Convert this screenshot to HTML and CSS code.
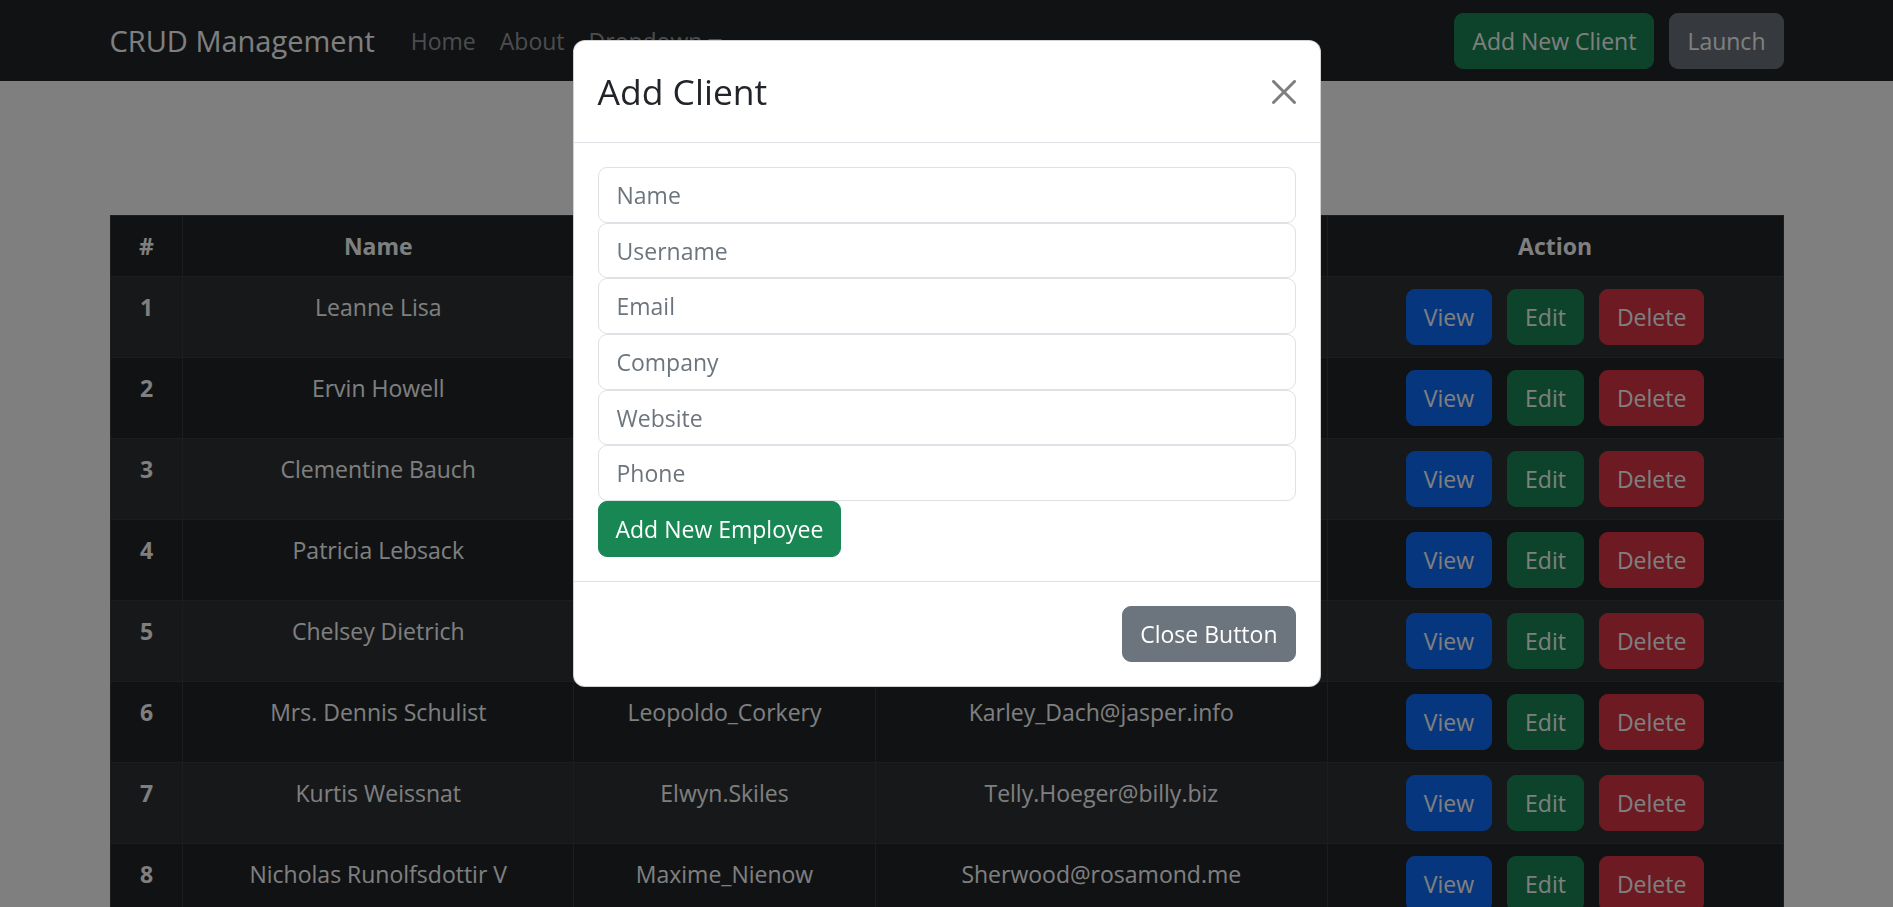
FILE: index.html
```html
<!DOCTYPE html>
<html lang="en">
<head>
<meta charset="utf-8">
<title>CRUD Management</title>
<link rel="stylesheet" href="styles.css">
</head>
<body>
<nav class="navbar">
  <div class="container nav-inner">
    <a class="brand" href="#">CRUD Management</a>
    <ul class="nav-links">
      <li><a class="nav-link" href="#">Home</a></li>
      <li><a class="nav-link" href="#">About</a></li>
      <li><a class="nav-link dropdown-toggle" href="#">Dropdown</a></li>
    </ul>
    <div class="nav-actions">
      <button class="btn btn-success">Add New Client</button>
      <button class="btn btn-secondary">Launch</button>
    </div>
  </div>
</nav>

<main class="container content">
  <table class="table">
    <colgroup>
      <col class="c-num"><col class="c-name"><col class="c-user"><col class="c-email"><col class="c-action">
    </colgroup>
    <thead>
      <tr><th>#</th><th>Name</th><th>Username</th><th>Email</th><th>Action</th></tr>
    </thead>
    <tbody>
      <tr><th>1</th><td>Leanne Lisa</td><td>Bret</td><td>Sincere@april.biz</td><td><div class="actions"><button class="btn btn-primary">View</button><button class="btn btn-success">Edit</button><button class="btn btn-danger">Delete</button></div></td></tr>
      <tr><th>2</th><td>Ervin Howell</td><td>Antonette</td><td>Shanna@melissa.tv</td><td><div class="actions"><button class="btn btn-primary">View</button><button class="btn btn-success">Edit</button><button class="btn btn-danger">Delete</button></div></td></tr>
      <tr><th>3</th><td>Clementine Bauch</td><td>Samantha</td><td>Nathan@yesenia.net</td><td><div class="actions"><button class="btn btn-primary">View</button><button class="btn btn-success">Edit</button><button class="btn btn-danger">Delete</button></div></td></tr>
      <tr><th>4</th><td>Patricia Lebsack</td><td>Karianne</td><td>Julianne.OConner@kory.org</td><td><div class="actions"><button class="btn btn-primary">View</button><button class="btn btn-success">Edit</button><button class="btn btn-danger">Delete</button></div></td></tr>
      <tr><th>5</th><td>Chelsey Dietrich</td><td>Kamren</td><td>Lucio_Hettinger@annie.ca</td><td><div class="actions"><button class="btn btn-primary">View</button><button class="btn btn-success">Edit</button><button class="btn btn-danger">Delete</button></div></td></tr>
      <tr><th>6</th><td>Mrs. Dennis Schulist</td><td>Leopoldo_Corkery</td><td>Karley_Dach@jasper.info</td><td><div class="actions"><button class="btn btn-primary">View</button><button class="btn btn-success">Edit</button><button class="btn btn-danger">Delete</button></div></td></tr>
      <tr><th>7</th><td>Kurtis Weissnat</td><td>Elwyn.Skiles</td><td>Telly.Hoeger@billy.biz</td><td><div class="actions"><button class="btn btn-primary">View</button><button class="btn btn-success">Edit</button><button class="btn btn-danger">Delete</button></div></td></tr>
      <tr><th>8</th><td>Nicholas Runolfsdottir V</td><td>Maxime_Nienow</td><td>Sherwood@rosamond.me</td><td><div class="actions"><button class="btn btn-primary">View</button><button class="btn btn-success">Edit</button><button class="btn btn-danger">Delete</button></div></td></tr>
      <tr><th>9</th><td>Glenna Reichert</td><td>Delphine</td><td>Chaim_McDermott@dana.io</td><td><div class="actions"><button class="btn btn-primary">View</button><button class="btn btn-success">Edit</button><button class="btn btn-danger">Delete</button></div></td></tr>
      <tr><th>10</th><td>Clementina DuBuque</td><td>Moriah.Stanton</td><td>Rey.Padberg@karina.biz</td><td><div class="actions"><button class="btn btn-primary">View</button><button class="btn btn-success">Edit</button><button class="btn btn-danger">Delete</button></div></td></tr>
    </tbody>
  </table>
</main>

<div class="modal-backdrop"></div>
<div class="modal">
  <div class="modal-dialog">
    <div class="modal-header">
      <h4 class="modal-title">Add Client</h4>
      <button class="btn-close" aria-label="Close">
        <svg viewBox="0 0 16 16" width="24" height="24"><path d="M.293.293a1 1 0 0 1 1.414 0L8 6.586 14.293.293a1 1 0 1 1 1.414 1.414L9.414 8l6.293 6.293a1 1 0 0 1-1.414 1.414L8 9.414l-6.293 6.293a1 1 0 0 1-1.414-1.414L6.586 8 .293 1.707a1 1 0 0 1 0-1.414z"/></svg>
      </button>
    </div>
    <div class="modal-body">
      <form class="client-form">
        <input class="form-control" type="text" placeholder="Name">
        <input class="form-control" type="text" placeholder="Username">
        <input class="form-control" type="text" placeholder="Email">
        <input class="form-control" type="text" placeholder="Company">
        <input class="form-control" type="text" placeholder="Website">
        <input class="form-control" type="text" placeholder="Phone">
        <div><button type="button" class="btn btn-success">Add New Employee</button></div>
      </form>
    </div>
    <div class="modal-footer">
      <button class="btn btn-secondary">Close Button</button>
    </div>
  </div>
</div>
</body>
</html>
```

FILE: styles.css
```css
* { box-sizing: border-box; }

html, body {
  margin: 0;
  height: 100%;
  overflow: hidden;
}

body {
  font-family: "Open Sans", "Noto Sans", "Liberation Sans", sans-serif;
  font-size: 23px;
  line-height: 36px;
  color: #212529;
  background: #fff;
}

.container {
  width: 1674px;
  margin: 0 auto;
}

/* ---------- navbar ---------- */
.navbar {
  background: #212529;
  height: 81px;
}

.nav-inner {
  height: 100%;
  display: flex;
  align-items: center;
}

.brand {
  color: #fff;
  text-decoration: none;
  font-size: 29px;
  line-height: 45px;
  margin-right: 24px;
}

.nav-links {
  display: flex;
  list-style: none;
  margin: 0;
  padding: 0;
  flex: 1;
}

.nav-link {
  display: block;
  padding: 12px 12px;
  color: rgba(255, 255, 255, 0.55);
  text-decoration: none;
}

.dropdown-toggle::after {
  content: "";
  display: inline-block;
  margin-left: 6px;
  vertical-align: 4px;
  border-top: 7px solid;
  border-left: 7px solid transparent;
  border-right: 7px solid transparent;
}

.nav-actions {
  display: flex;
  gap: 15px;
}

/* ---------- buttons ---------- */
.btn {
  font-family: inherit;
  font-size: 23px;
  line-height: 36px;
  height: 56px;
  padding: 9px 17px;
  border: 1px solid transparent;
  border-radius: 9px;
  color: #fff;
  cursor: pointer;
  white-space: nowrap;
}

.btn-primary { background: #0d6efd; border-color: #0d6efd; }
.btn-success { background: #198754; border-color: #198754; }
.btn-danger { background: #dc3545; border-color: #dc3545; }
.btn-secondary { background: #6c757d; border-color: #6c757d; }

/* ---------- table ---------- */
.content {
  padding-top: 134px;
}

.table {
  width: 100%;
  border-collapse: collapse;
  background: #212529;
  color: #fff;
  text-align: center;
}

.c-num { width: 73px; }
.c-name { width: 391px; }
.c-user { width: 302px; }
.c-email { width: 452px; }
.c-action { width: 456px; }

.table th,
.table td {
  border: 1px solid #373b3e;
  padding: 12px;
  vertical-align: top;
  font-weight: 400;
}

.table th {
  font-weight: 700;
}

.table tbody tr:nth-child(odd) {
  background: #2c3034;
}

.actions {
  display: flex;
  justify-content: center;
  gap: 15px;
}

/* ---------- modal ---------- */
.modal-backdrop {
  position: fixed;
  inset: 0;
  background: rgba(0, 0, 0, 0.5);
}

.modal {
  position: fixed;
  inset: 0;
  display: flex;
  justify-content: center;
  align-items: flex-start;
  padding-top: 40px;
}

.modal-dialog {
  width: 748px;
  background: #fff;
  border: 1px solid rgba(0, 0, 0, 0.175);
  border-radius: 12px;
}

.modal-header {
  display: flex;
  align-items: center;
  justify-content: space-between;
  padding: 24px;
  border-bottom: 1px solid #dee2e6;
}

.modal-title {
  margin: 0;
  font-size: 35.5px;
  line-height: 53px;
  font-weight: 500;
}

.btn-close {
  background: none;
  border: 0;
  padding: 0;
  width: 24px;
  height: 24px;
  opacity: 0.5;
  display: flex;
}

.btn-close svg { fill: #000; }

.modal-body {
  padding: 24px;
}

.client-form {
  display: flex;
  flex-direction: column;
}

.form-control {
  display: block;
  width: 100%;
  height: 55.7px;
  padding: 9px 18px;
  font-family: inherit;
  font-size: 23px;
  line-height: 36px;
  color: #212529;
  background: #fff;
  border: 1px solid #dee2e6;
  border-radius: 9px;
  outline: none;
}

.form-control::placeholder {
  color: #6c757d;
}

.modal-footer {
  display: flex;
  justify-content: flex-end;
  padding: 18px;
  border-top: 1px solid #dee2e6;
}

.modal-footer .btn {
  margin: 6px;
}
```
